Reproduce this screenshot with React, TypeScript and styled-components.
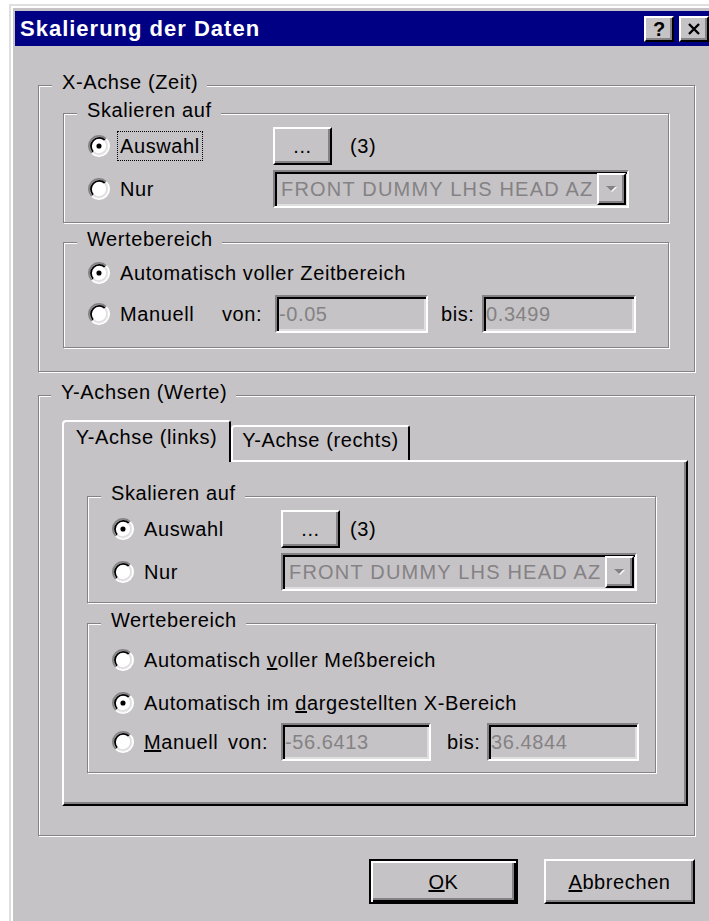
import React from 'react'
import styled, { createGlobalStyle, css } from 'styled-components'

const face = '#c6c3c6'
const shadow = '#848284'
const light = '#dedfde'
const navy = '#000084'

const GlobalStyle = createGlobalStyle`
  html, body {
    margin: 0;
    padding: 0;
    background: #ffffff;
    overflow: hidden;
  }
  body {
    font-family: "Liberation Sans", Arial, sans-serif;
    font-size: 20px;
    line-height: 22px;
    letter-spacing: 0.6px;
    color: #000;
  }
`

const raised = css`
  border: 2px solid;
  border-color: #fff #000 #000 #fff;
  box-shadow: inset -2px -2px 0 ${shadow};
`

const sunken = css`
  border: 2px solid;
  border-color: ${shadow} #fff #fff ${shadow};
  box-shadow: inset 2px 2px 0 #000, inset -2px -2px 0 ${light};
`

const Window = styled.div`
  box-sizing: border-box;
  width: 713px;
  height: 940px;
  margin: 4px 0 0 9px;
  padding: 5px 4px 0 4px;
  background: ${face};
  border-top: 2px solid ${light};
  border-left: 2px solid ${light};
  box-shadow: inset 2px 2px 0 #fff;
`

const TitleBar = styled.div`
  display: flex;
  align-items: center;
  height: 35px;
  padding: 0 9px 0 5px;
  background: ${navy};
  color: #fff;
  font-weight: bold;
  font-size: 22px;
  letter-spacing: 1px;
`

const Caption = styled.span`
  flex: 1;
  white-space: nowrap;
`

const CaptionButton = styled.button<{ $gap?: number }>`
  box-sizing: border-box;
  width: 30px;
  height: 26px;
  margin-left: ${(p) => p.$gap ?? 0}px;
  padding: 0;
  display: flex;
  align-items: center;
  justify-content: center;
  background: ${face};
  color: #000;
  font: bold 20px/1 "Liberation Sans", Arial, sans-serif;
  ${raised}
`

const Body = styled.div`
  display: flex;
  flex-direction: column;
  padding: 25px 23px 0;
`

const Group = styled.fieldset<{ $pad: string; $mt?: number }>`
  display: flex;
  flex-direction: column;
  min-width: 0;
  margin: ${(p) => p.$mt ?? 0}px 0 0;
  padding: ${(p) => p.$pad};
  border: 1px solid ${shadow};
  box-shadow: inset 1px 1px 0 #fff, 1px 1px 0 #fff;
`

const Legend = styled.legend`
  margin-left: -11px;
  padding: 0 9px 6px 10px;
  line-height: 22px;
  background: ${face};
`

const Row = styled.div<{ $h: number; $mt?: number }>`
  display: flex;
  align-items: center;
  height: ${(p) => p.$h}px;
  margin-top: ${(p) => p.$mt ?? 0}px;
`

const Option = styled.label<{ $w?: number }>`
  display: flex;
  align-items: center;
  flex-shrink: 0;
  width: ${(p) => (p.$w ? `${p.$w}px` : 'auto')};
  white-space: nowrap;
`

const OptionText = styled.span<{ $focus?: boolean }>`
  margin-left: 7px;
  padding: 3px 2px;
  border: 1px ${(p) => (p.$focus ? 'dotted #000' : 'solid transparent')};
`

const RadioSvg = styled.svg`
  flex-shrink: 0;
  display: block;
`

const PushButton = styled.button<{ $w: number; $h: number; $default?: boolean }>`
  box-sizing: border-box;
  flex-shrink: 0;
  width: ${(p) => p.$w}px;
  height: ${(p) => p.$h}px;
  padding: 0;
  background: ${face};
  color: #000;
  font: 20px/22px "Liberation Sans", Arial, sans-serif;
  letter-spacing: 0.6px;
  ${raised}
  ${(p) =>
    p.$default &&
    css`
      border-color: #000;
      box-shadow: inset 2px 2px 0 #fff, inset -2px -2px 0 #000,
        inset -4px -4px 0 ${shadow};
    `}
`

const Count = styled.span<{ $ml: number }>`
  margin-left: ${(p) => p.$ml}px;
`

const Combo = styled.div<{ $w: number }>`
  box-sizing: border-box;
  flex-shrink: 0;
  display: flex;
  align-items: center;
  justify-content: space-between;
  width: ${(p) => p.$w}px;
  height: 38px;
  padding: 0 1px 0 6px;
  color: ${shadow};
  letter-spacing: 1.2px;
  white-space: nowrap;
  ${sunken}
`

const DropButton = styled.span`
  box-sizing: border-box;
  display: flex;
  align-items: center;
  justify-content: center;
  width: 29px;
  height: 32px;
  background: ${face};
  ${raised}
`

const Field = styled.div<{ $w: number }>`
  box-sizing: border-box;
  flex-shrink: 0;
  display: flex;
  align-items: center;
  width: ${(p) => p.$w}px;
  height: 38px;
  padding-left: 2px;
  color: ${shadow};
  ${sunken}
`

const FieldLabel = styled.span<{ $w: number; $pl: number }>`
  box-sizing: border-box;
  flex-shrink: 0;
  width: ${(p) => p.$w}px;
  padding-left: ${(p) => p.$pl}px;
`

const TabStrip = styled.div`
  display: flex;
  align-items: flex-end;
  height: 40px;
`

const Tab = styled.div<{ $active?: boolean; $w: number }>`
  box-sizing: border-box;
  display: flex;
  justify-content: center;
  width: ${(p) => p.$w}px;
  background: ${face};
  white-space: nowrap;
  border-top: 2px solid #fff;
  border-left: 2px solid #fff;
  border-right: 2px solid #000;
  border-radius: 4px 3px 0 0;
  ${(p) =>
    p.$active
      ? css`
          position: relative;
          z-index: 1;
          height: 42px;
          margin-bottom: -2px;
          padding-top: 4px;
        `
      : css`
          height: 35px;
          padding-top: 2px;
        `}
`

const TabPanel = styled.div`
  box-sizing: border-box;
  display: flex;
  flex-direction: column;
  padding: 20px 30px 31px 23px;
  border: 2px solid;
  border-color: #fff #000 #000 #fff;
  box-shadow: inset -2px -2px 0 ${shadow};
`

const ButtonRow = styled.div`
  display: flex;
  justify-content: flex-end;
  gap: 26px;
  margin-top: 23px;
`

function Radio({ checked }: { checked?: boolean }) {
  return (
    <RadioSvg viewBox="0 0 12 12" width={22} height={22}>
      <circle cx="6" cy="6" r="5" fill="#fff" />
      <path d="M9.89 2.11A5.5 5.5 0 0 0 2.11 9.89" stroke={shadow} fill="none" />
      <path d="M2.11 9.89A5.5 5.5 0 0 0 9.89 2.11" stroke="#fff" fill="none" />
      <path d="M9.18 2.82A4.5 4.5 0 0 0 2.82 9.18" stroke="#000" fill="none" />
      <path d="M2.82 9.18A4.5 4.5 0 0 0 9.18 2.82" stroke={light} fill="none" />
      {checked && <circle cx="6" cy="6" r="1.4" fill="#000" />}
    </RadioSvg>
  )
}

function DropArrow() {
  return (
    <svg width="14" height="8" viewBox="0 0 14 8">
      <path d="M2 2h10l-5 5z" fill="#fff" />
      <path d="M1 1h10l-5 5z" fill={shadow} />
    </svg>
  )
}

function ChannelPicker({ col, countGap, focus }: { col: number; countGap: number; focus?: boolean }) {
  return (
    <>
      <Row $h={38}>
        <Option $w={col}>
          <Radio checked />
          <OptionText $focus={focus}>Auswahl</OptionText>
        </Option>
        <PushButton $w={59} $h={38}>...</PushButton>
        <Count $ml={countGap}>(3)</Count>
      </Row>
      <Row $h={38} $mt={5}>
        <Option $w={col}>
          <Radio />
          <OptionText>Nur</OptionText>
        </Option>
        <Combo $w={356}>
          <span>FRONT DUMMY LHS HEAD AZ</span>
          <DropButton>
            <DropArrow />
          </DropButton>
        </Combo>
      </Row>
    </>
  )
}

export default function App() {
  return (
    <>
      <GlobalStyle />
      <Window>
        <TitleBar>
          <Caption>Skalierung der Daten</Caption>
          <CaptionButton>?</CaptionButton>
          <CaptionButton $gap={5}>
            <svg width="14" height="12" viewBox="0 0 14 12">
              <path d="M2 1l10 10M12 1L2 11" stroke="#000" strokeWidth="2.4" />
            </svg>
          </CaptionButton>
        </TitleBar>

        <Body>
          <Group $pad="0 25px 23px 24px">
            <Legend>X-Achse (Zeit)</Legend>
            <Group $pad="0 24px 14px 24px">
              <Legend>Skalieren auf</Legend>
              <ChannelPicker col={185} countGap={18} focus />
            </Group>
            <Group $pad="2px 24px 14px 24px" $mt={5}>
              <Legend>Wertebereich</Legend>
              <Row $h={30}>
                <Option>
                  <Radio checked />
                  <OptionText>Automatisch voller Zeitbereich</OptionText>
                </Option>
              </Row>
              <Row $h={38} $mt={7}>
                <Option $w={134}>
                  <Radio />
                  <OptionText>Manuell</OptionText>
                </Option>
                <FieldLabel $w={53} $pl={0}>von:</FieldLabel>
                <Field $w={153}>-0.05</Field>
                <FieldLabel $w={54} $pl={13}>bis:</FieldLabel>
                <Field $w={154}>0.3499</Field>
              </Row>
            </Group>
          </Group>

          <Group $pad="11px 6px 29px 23px" $mt={9}>
            <Legend>Y-Achsen (Werte)</Legend>
            <TabStrip>
              <Tab $active $w={169}>Y-Achse (links)</Tab>
              <Tab $w={179}>Y-Achse (rechts)</Tab>
            </TabStrip>
            <TabPanel>
              <Group $pad="0 24px 11px 24px">
                <Legend>Skalieren auf</Legend>
                <ChannelPicker col={169} countGap={10} />
              </Group>
              <Group $pad="8px 24px 11px 24px" $mt={6}>
                <Legend>Wertebereich</Legend>
                <Row $h={30}>
                  <Option>
                    <Radio />
                    <OptionText>
                      Automatisch <u>v</u>oller Meßbereich
                    </OptionText>
                  </Option>
                </Row>
                <Row $h={30} $mt={13}>
                  <Option>
                    <Radio checked />
                    <OptionText>
                      Automatisch im <u>d</u>argestellten X-Bereich
                    </OptionText>
                  </Option>
                </Row>
                <Row $h={38} $mt={5}>
                  <Option $w={116}>
                    <Radio />
                    <OptionText>
                      <u>M</u>anuell
                    </OptionText>
                  </Option>
                  <FieldLabel $w={53} $pl={0}>von:</FieldLabel>
                  <Field $w={150}>-56.6413</Field>
                  <FieldLabel $w={56} $pl={16}>bis:</FieldLabel>
                  <Field $w={152}>36.4844</Field>
                </Row>
              </Group>
            </TabPanel>
          </Group>

          <ButtonRow>
            <PushButton $w={149} $h={45} $default>
              <u>O</u>K
            </PushButton>
            <PushButton $w={151} $h={45}>
              <u>A</u>bbrechen
            </PushButton>
          </ButtonRow>
        </Body>
      </Window>
    </>
  )
}
